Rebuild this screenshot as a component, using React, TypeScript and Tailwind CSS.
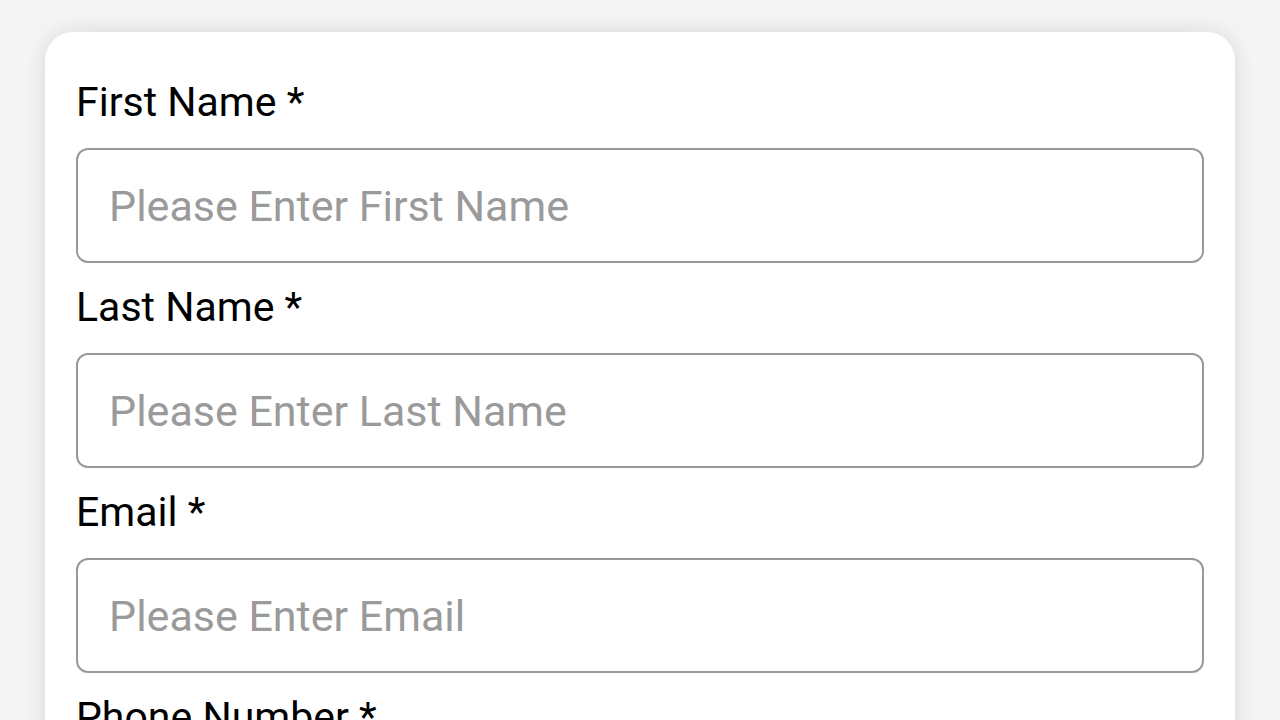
import React from 'react';

const fields = [
  { label: 'First Name', placeholder: 'Please Enter First Name' },
  { label: 'Last Name', placeholder: 'Please Enter Last Name' },
  { label: 'Email', placeholder: 'Please Enter Email' },
  { label: 'Phone Number', placeholder: 'Please Enter Phone Number' },
];

export default function App() {
  return (
    <div
      className="h-[720px] w-[1280px] overflow-hidden bg-[#f5f5f5] px-[45px] pt-[32px]"
      style={{ fontFamily: 'Roboto, "Noto Sans", sans-serif' }}
    >
      <div className="rounded-[28px] bg-white px-[31px] pt-[47px] pb-10 shadow-[0_0_24px_rgba(0,0,0,0.12)]">
        {fields.map((f) => (
          <div key={f.label}>
            <label className="block text-[41px] leading-[47px] text-black">
              {f.label} *
            </label>
            <input
              type="text"
              placeholder={f.placeholder}
              className="mt-[22px] mb-[21px] block h-[115px] w-full rounded-[12px] border-2 border-[#999999] bg-white px-[31px] text-[43px] text-black outline-none placeholder:text-[#9a9a9a]"
            />
          </div>
        ))}
      </div>
    </div>
  );
}
